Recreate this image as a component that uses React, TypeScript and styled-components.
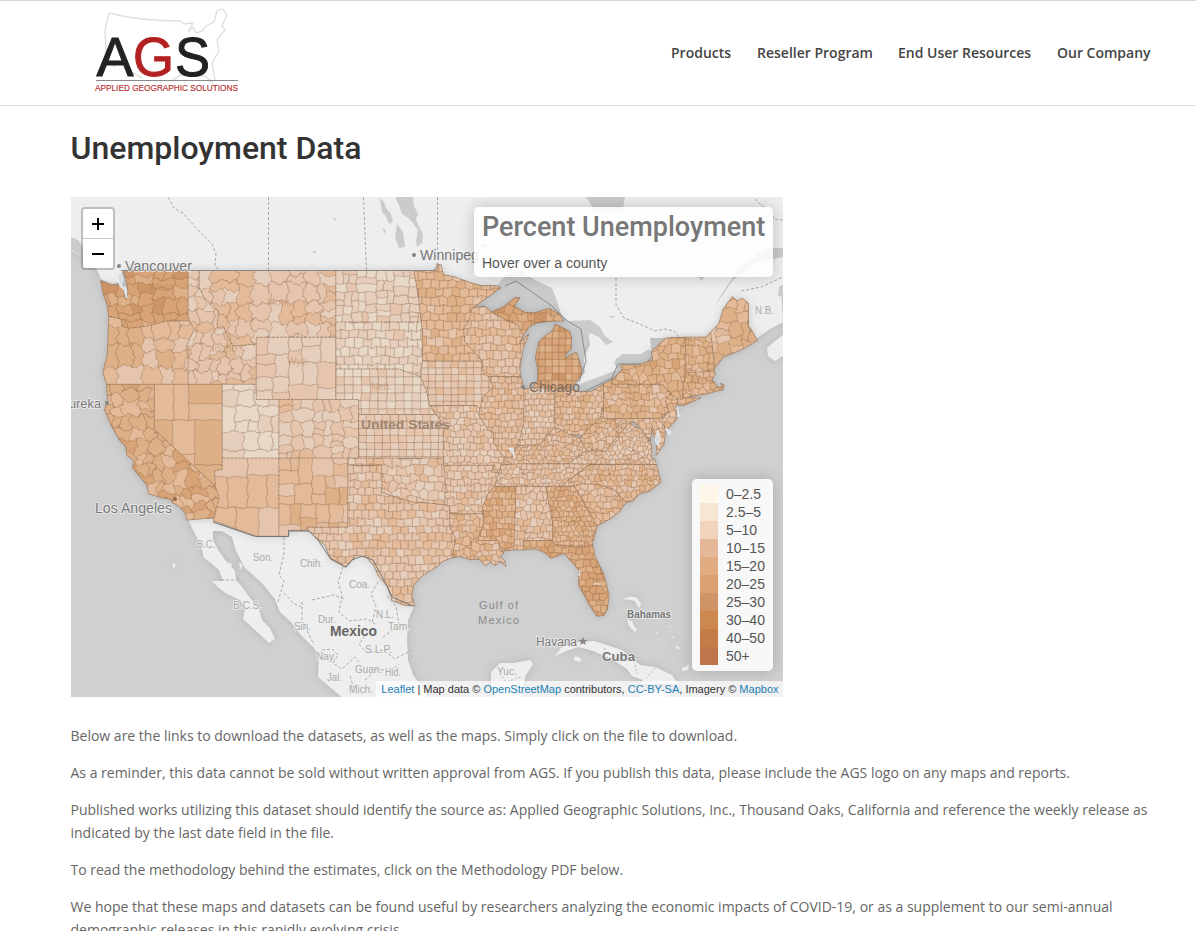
import React from 'react';
import styled, { createGlobalStyle } from 'styled-components';

const Global = createGlobalStyle`
  *, *::before, *::after { box-sizing: border-box; }
  html, body { margin: 0; padding: 0; background: #fff; overflow: hidden; }
  body { height: 931px; font-family: "Open Sans", Arial, sans-serif; color: #666; }
`;

const Page = styled.div`
  height: 931px;
  overflow: hidden;
`;
const Header = styled.header`
  display: flex;
  justify-content: space-between;
  height: 106px;
  border-top: 1px solid #d9d9d9;
  border-bottom: 1px solid #dcdcdc;
  padding: 0 46px 0 89px;
`;
const Logo = styled.svg`
  display: block;
  width: 160px;
  height: 104px;
  overflow: visible;
`;
const Nav = styled.nav`
  display: flex;
  gap: 26px;
  padding-top: 42px;
`;
const NavLink = styled.a<{ $w: number }>`
  width: ${p => p.$w}px;
  font: 600 14px/20px "Open Sans", sans-serif;
  color: #444;
  white-space: nowrap;
`;
const Main = styled.main`
  padding: 22px 45px 0 70.5px;
`;
const Title = styled.h1`
  margin: 0 0 28px;
  font: 500 32px/41px Roboto, sans-serif;
  color: #333;
`;
const MapFrame = styled.section`
  position: relative;
  width: 712px;
  height: 500px;
  overflow: hidden;
  background: #d0d0d0;
`;
const MapSvg = styled.svg`
  display: block;
  width: 712px;
  height: 500px;
`;
const ZoomControl = styled.div`
  position: absolute;
  left: 10px;
  top: 10px;
  width: 34px;
  border: 2px solid rgba(0, 0, 0, 0.2);
  border-radius: 4px;
  background-clip: padding-box;
`;
const ZoomButton = styled.button<{ $first?: boolean }>`
  display: flex;
  align-items: center;
  justify-content: center;
  width: 30px;
  height: ${p => (p.$first ? 30 : 29)}px;
  padding: 0;
  border: 0;
  border-bottom: ${p => (p.$first ? '1px solid #ccc' : '0')};
  border-radius: ${p => (p.$first ? '2px 2px 0 0' : '0 0 2px 2px')};
  background: #fff;
  color: #000;
`;
const Panel = styled.div`
  position: absolute;
  border-radius: 5px;
  background: rgba(255, 255, 255, 0.85);
  box-shadow: 0 0 15px rgba(0, 0, 0, 0.2);
`;
const Info = styled(Panel)`
  right: 10px;
  top: 10px;
  width: 299px;
  height: 70px;
  padding: 6px 8px 6px 8.500px;
  color: #555;
  font: 14px/16px "Liberation Sans", Arial, sans-serif;
  white-space: nowrap;
`;
const InfoTitle = styled.h4`
  margin: 0 0 15px;
  font: 500 27px/28px Roboto, sans-serif;
  height: 27px;
  color: #777;
`;
const Legend = styled(Panel)`
  right: 10px;
  bottom: 26px;
  width: 81px;
  height: 192px;
  padding: 6px 0 6px 8px;
  color: #555;
  font: 14px/18px "Liberation Sans", Arial, sans-serif;
  white-space: nowrap;
`;
const LegendRow = styled.div`
  display: flex;
  gap: 8.500px;
  height: 18px;
`;
const Swatch = styled.i<{ $c: string }>`
  flex: none;
  width: 18px;
  height: 18px;
  background: ${p => p.$c};
`;
const Attribution = styled.div`
  position: absolute;
  right: 0;
  bottom: 0;
  height: 16px;
  padding: 0 4px 0 5px;
  background: rgba(255, 255, 255, 0.7);
  color: #333;
  font: 11px/16px "Liberation Sans", Arial, sans-serif;
  white-space: nowrap;
`;
const Link = styled.a`
  color: #1b80b4;
`;
const Copy = styled.div`
  padding-top: 27px;
`;
const Para = styled.p`
  margin: 0 0 14px;
  font-size: 14px;
  line-height: 23px;
  white-space: nowrap;
`;

/* ---- projection (Web Mercator) ---- */
type Pt = [number, number];
const px = (lon: number) => lon * 11.378 + 1519.7;
const py = (lat: number) => 911.8 - 651.9 * Math.log(Math.tan(Math.PI / 4 + (lat * Math.PI) / 360));
const parse = (s: string): Pt[] =>
  s.trim().split(/\s+/).map(q => {
    const [a, b] = q.split(',').map(Number);
    return [px(-a), py(b)] as Pt;
  });
const noise = (a: number, b: number, c: number) => {
  const v = Math.sin(a * 127.1 + b * 311.7 + c * 74.7) * 43758.5453;
  return v - Math.floor(v);
};
const toPath = (pts: Pt[]) => 'M' + pts.map(p => p[0].toFixed(1) + ' ' + p[1].toFixed(1)).join('L') + 'Z';

/* [id, shade, county width, county height, irregularity, outline as west-longitude,latitude] */
type State = [string, number, number, number, number, string];
const STATES: State[] = [
  ['WA', 4.9, 15, 12, 0.7, '124.7,48.4 123.9,48.17 123.1,48.15 122.75,48.1 122.65,47.4 122.4,47.3 122.3,47.8 122.5,48.5 122.75,49 117.03,49 117.03,46.4 116.92,46 118.98,46 119.3,45.93 120.5,45.7 121.2,45.65 122.2,45.55 122.8,45.65 122.9,46.1 123.4,46.2 124,46.3 124.1,46.9 124.5,47.7'],
  ['OR', 3, 18, 17, 0.8, '124,46.25 123.4,46.2 122.9,46.1 122.8,45.65 122.2,45.55 121.2,45.65 120.5,45.7 119.3,45.93 118.98,46 116.92,46 116.5,45.5 117.2,44.4 117.03,44.2 117.03,42 124.2,42 124.5,42.8 124.1,44'],
  ['ID', 1.8, 14, 12, 0.9, '117.03,49 116.05,49 116.05,48 115.7,47.5 114.7,46.7 114.35,46.65 114.5,45.6 113.9,45.65 113.5,44.9 113,44.45 111.5,44.55 111.05,44.5 111.05,42 117.03,42 117.03,44.2 117.2,44.4 116.5,45.5 116.92,46 117.03,46.4'],
  ['MT', 2.1, 16, 14, 0.95, '116.05,49 104.05,49 104.05,45 111.05,45 111.05,44.5 111.5,44.55 113,44.45 113.5,44.9 113.9,45.65 114.5,45.6 114.35,46.65 114.7,46.7 115.7,47.5 116.05,48'],
  ['WY', 1.5, 20, 17, 0.35, '111.05,45 104.05,45 104.05,41 111.05,41'],
  ['CA', 4, 14, 11, 0.95, '124.2,42 120,42 120,39 114.63,35 114.3,34.2 114.72,32.72 117.12,32.53 117.3,33.1 118,33.65 118.4,33.8 118.5,34.05 119.2,34.15 120.5,34.45 120.65,35.1 121.9,36.3 121.8,36.85 122.4,37.2 122.5,37.8 123,38.2 123.8,39.3 124.35,40.3 124.1,41'],
  ['NV', 3.5, 28, 31, 0.2, '120,42 114.04,42 114.04,36.2 114.7,36.1 114.63,35 120,39'],
  ['UT', 0.7, 19, 14, 0.5, '114.04,42 111.05,42 111.05,41 109.05,41 109.05,37 114.04,37'],
  ['AZ', 2.5, 25, 26, 0.35, '114.04,37 109.05,37 109.05,31.33 111.07,31.33 114.81,32.5 114.3,34.2 114.63,35 114.7,36.1 114.04,36.2'],
  ['NM', 3.2, 16, 16, 0.3, '109.05,37 103,37 103,32 106.6,32 106.5,31.78 108.2,31.78 108.2,31.33 109.05,31.33'],
  ['CO', 1.6, 13, 11, 0.6, '109.05,41 102.05,41 102.05,37 109.05,37'],
  ['ND', 0.9, 11, 10, 0.3, '104.05,49 97.2,49 96.8,47.5 96.55,45.94 104.05,45.94'],
  ['SD', 0.6, 9, 8.5, 0.4, '104.05,45.94 96.55,45.94 96.45,45.3 96.45,43.5 96.6,42.5 97.8,42.8 98.5,43 104.05,43'],
  ['NE', 0.9, 8.5, 8, 0.25, '104.05,43 98.5,43 97.8,42.8 96.6,42.5 96.1,41.6 95.8,40.6 95.3,40 102.05,40 102.05,41 104.05,41'],
  ['KS', 1.4, 8, 7, 0.25, '102.05,40 95.3,40 94.9,39.7 94.6,39.1 94.6,37 102.05,37'],
  ['OK', 1.8, 9, 8, 0.65, '103,37 94.6,37 94.43,35.4 94.48,33.65 96,33.8 97.2,33.85 98.5,34.1 100,34.55 100,36.5 103,36.5'],
  ['TX', 2.1, 7.8, 7.6, 0.34, '103,36.5 100,36.5 100,34.55 98.5,34.1 97.2,33.85 96,33.8 94.48,33.65 94.04,33.5 94.04,32 93.55,31.2 93.7,30.3 93.85,29.7 94.7,29.4 95.2,29 96.5,28.3 97.2,27.6 97.4,26.8 97.15,25.95 98.2,26.05 99.1,26.4 99.5,27.5 100.3,28.3 100.7,29.1 101.4,29.77 102.3,29.88 102.8,29.35 103.2,28.98 104.5,29.6 105,30.65 106.5,31.78 106.6,32 103,32'],
  ['MN', 3.1, 8.5, 8.2, 0.35, '97.2,49 95.15,49 95.15,49.38 94.8,49.3 94.6,48.75 93.5,48.6 92.3,48.3 91.3,48.1 90,48.1 89.55,48 92.1,46.75 92.3,46.1 92.8,45.6 92.75,44.75 91.2,43.5 96.45,43.5 96.45,45.3 96.55,45.94 96.8,47.5'],
  ['IA', 1.8, 7.6, 6.7, 0.18, '96.45,43.5 91.2,43.5 91.1,42.7 90.65,42.5 90.2,41.8 91.1,41.2 91.4,40.4 91.7,40.6 95.8,40.6 96.1,41.6 96.6,42.5'],
  ['MO', 1.9, 6.8, 6.3, 0.5, '95.8,40.6 91.7,40.6 91.4,40.4 91.5,40 90.7,39 90.2,38.7 90.2,38.1 89.5,37.3 89.15,37 89.5,36.5 89.7,36 90.4,36 90.1,36.5 94.6,36.5 94.6,39.1 94.9,39.7'],
  ['AR', 2.1, 7, 6.6, 0.5, '94.6,36.5 90.1,36.5 90.4,36 89.7,36 90.1,35 90.6,34.6 91.15,33.5 91.15,33 94.04,33 94.04,33.5 94.48,33.65 94.43,35.4'],
  ['LA', 2.9, 6.6, 6, 0.75, '94.04,33 91.15,33 91,32.4 91.6,31 89.75,31 89.6,30.2 89.3,30.1 89.6,29.8 89.2,29.4 89.1,29.05 89.6,29.4 90.1,29.1 90.4,29.4 90.9,29.1 91.4,29.6 92.2,29.55 93.2,29.8 93.85,29.7 93.7,30.3 93.55,31.2 94.04,32'],
  ['WI', 2.5, 7.5, 7.5, 0.4, '92.1,46.75 91,46.9 90.4,46.55 89,46 88.1,45.8 87.6,45.1 88,44.55 87.1,45.2 87.6,44.3 87.9,43 87.8,42.5 90.65,42.5 91.1,42.7 91.2,43.5 92.75,44.75 92.8,45.6 92.3,46.1'],
  ['UP', 4.7, 9, 8, 0.6, '90.4,46.55 89.3,46.85 88.3,47.4 87.9,47.4 88.4,46.9 87.4,46.5 86.5,46.5 85.3,46.75 84.5,46.45 84,46 85,46 86.3,45.9 87,45.7 87.6,45.1 88.1,45.8 89,46'],
  ['MI', 4.8, 6.7, 7, 0.22, '84.75,45.8 83.5,45.35 83.35,45 83.35,44.3 83.9,43.9 83.9,43.65 83.4,43.9 82.9,44.05 82.45,43 82.5,42.6 83.2,41.95 83.45,41.73 86.8,41.76 86.3,42.3 86.3,43 86.5,43.7 86.2,44.7 85.6,45.1 85,45.4'],
  ['IL', 2.6, 6.6, 6.2, 0.45, '90.65,42.5 87.8,42.5 87.52,41.7 87.53,39.35 87.9,38.3 88.1,37.9 88.5,37.1 89.15,37 89.5,37.3 90.2,38.1 90.2,38.7 90.7,39 91.5,40 91.4,40.4 91.1,41.2 90.2,41.8'],
  ['IN', 2, 5.6, 5.7, 0.35, '87.52,41.7 86.8,41.76 84.8,41.76 84.8,39.1 85.4,38.7 86,38 87.2,37.85 88.1,37.9 87.9,38.3 87.53,39.35'],
  ['OH', 2.8, 5.8, 5.8, 0.4, '84.8,41.73 83.45,41.73 82.7,41.5 81.7,41.5 80.52,42 80.52,40.6 80.85,39.7 81.8,39.1 82.3,38.6 83.6,38.65 84.3,39 84.8,39.1'],
  ['KY', 2.6, 5, 4.6, 0.85, '84.8,39.1 84.3,39 83.6,38.65 82.6,38.4 82,37.5 83.7,36.6 88,36.6 89.5,36.5 89.15,37 88.5,37.1 88.1,37.9 87.2,37.85 86,38 85.4,38.7'],
  ['TN', 2.2, 5.4, 5, 0.75, '89.5,36.5 88,36.6 83.7,36.6 81.7,36.6 84.3,35 90.1,35 89.7,36'],
  ['MS', 3.9, 6.2, 6.2, 0.4, '90.1,35 88.2,35 88.4,30.3 89.6,30.2 89.75,31 91.6,31 91,32.4 91.15,33.5 90.6,34.6'],
  ['AL', 2.1, 6.5, 6.5, 0.6, '88.2,35 85.6,35 85,32.3 85,31 87.6,31 87.5,30.3 88.4,30.3'],
  ['GA', 3.7, 5.1, 5, 0.65, '85.6,35 83.1,35 82.2,33.8 81.1,32.1 81.5,30.75 82.1,30.5 84.9,30.7 85,31 85,32.3'],
  ['FL', 4.5, 7, 6.5, 0.45, '87.6,31 85,31 84.9,30.7 82.1,30.5 81.5,30.75 81.3,29.8 80.5,28.4 80.05,26.8 80.2,25.7 80.5,25.2 81.1,25.15 81.8,26.1 82.2,26.8 82.7,27.6 82.65,28.7 83.1,29.2 84,30.05 85.1,29.65 85.7,30.1 86.5,30.4 87.5,30.3'],
  ['SC', 2.7, 6.6, 6, 0.7, '83.1,35 82.3,35.2 81,35.1 79.7,34.8 78.55,33.85 79.2,33.1 80,32.6 81.1,32.1 82.2,33.8'],
  ['NC', 2.9, 5.6, 5.4, 0.75, '84.3,35 81.7,36.55 75.9,36.55 75.5,35.3 76.5,34.65 77.4,34.45 78,33.9 78.55,33.85 79.7,34.8 81,35.1 82.3,35.2 83.1,35'],
  ['VA', 2, 4.8, 4.5, 0.9, '83.7,36.6 82,37.5 80.3,37.5 79,38.8 78.3,39.4 77.1,38.9 76.3,37.9 76.3,37 76,36.9 75.9,36.55'],
  ['WV', 2.7, 5.5, 5.3, 0.85, '82.6,38.4 82.3,38.6 81.8,39.1 80.85,39.7 80.52,40.6 80.52,39.72 77.8,39.5 78.3,39.4 79,38.8 80.3,37.5 82,37.5'],
  ['MD', 2.4, 5.6, 5.4, 0.8, '79.5,39.72 75.8,39.72 75.4,39.8 75.1,38.8 75.2,38 75.9,37.2 75.8,38 76.3,39.1 76.4,38.2 77.1,38.9 77.8,39.5 79.5,39.3'],
  ['PA', 3.2, 7.6, 6.6, 0.7, '80.52,42 79.76,42.3 79.76,42 75.3,42 74.7,41.4 75.1,40.9 74.8,40.2 75.4,39.8 75.8,39.72 80.52,39.72'],
  ['NJ', 3.2, 6.5, 6, 0.7, '74.7,41.4 74,41 74.2,40.5 74.1,39.7 74.9,39 75.5,39.5 74.8,40.2 75.1,40.9'],
  ['NY', 3.6, 8, 7.5, 0.75, '79.76,42.3 78.9,42.9 79,43.25 77.5,43.25 76.2,43.55 76.3,44.1 75,44.95 73.35,45 73.25,42.75 73.5,42.05 73.6,41.1 72,41.1 73.5,40.6 74,40.65 74,41 74.7,41.4 75.3,42 79.76,42'],
  ['NE2', 3.6, 6.8, 6.2, 0.75, '73.5,42.05 73.25,42.75 71.1,42.9 70.7,42.7 71,42.3 70.5,41.8 70.1,41.8 70.2,42.05 69.95,41.95 70,41.65 70.7,41.55 71.3,41.4 73.6,41.1'],
  ['VTNH', 3.2, 7, 7.6, 0.75, '73.35,45 71.5,45 71.1,45.3 70.75,43.1 70.8,42.85 73.25,42.75'],
  ['ME', 3, 12, 13, 0.6, '71.1,45.3 70.4,45.8 70,46.7 69.2,47.45 68.8,47.2 68.3,47.35 67.8,47.07 67.8,45.7 67.4,45.3 67,44.8 68.2,44.3 69,44.05 70,43.75 70.75,43.1'],
];

const SHADES = ['#e7d8c8', '#e6cebc', '#e5c5ae', '#e3bb9a', '#deb087', '#d7a377', '#cd9567'];

const shadeIndex = (v: number) => Math.max(0, Math.min(SHADES.length - 1, Math.round(v)));

/* Dense, fairly even counties: a jittered brick pattern. */
function brickMesh(pts: Pt[], seed: number, w: number, h: number, j: number, level: number) {
  const xs = pts.map(p => p[0]);
  const ys = pts.map(p => p[1]);
  const x0 = Math.min(...xs) - w;
  const y0 = Math.min(...ys);
  const cols = Math.ceil((Math.max(...xs) - x0) / w) + 1;
  const rows = Math.ceil((Math.max(...ys) - y0) / h) + 1;
  const vert = (k: number, r: number): Pt => {
    const flat = j < 0.3 ? 0.25 : 1;
    return [
      x0 + k * w * 0.5 + (noise(k, r, seed) - 0.5) * w * j * 0.6,
      y0 + r * h + (noise(k, r, seed + 9) - 0.5) * h * j * 1.05 * flat,
    ];
  };
  const out: string[] = SHADES.map(() => '');
  for (let r = 0; r < rows; r++) {
    const off = j < 0.3 ? 0 : r % 2;
    for (let c = 0; c < cols; c++) {
      const k = c * 2 + off;
      const poly: Pt[] = [vert(k, r), vert(k + 1, r), vert(k + 2, r), vert(k + 2, r + 1), vert(k + 1, r + 1), vert(k, r + 1)];
      out[shadeIndex(level + (noise(c, r, seed + 3) - 0.5) * 1.9)] += toPath(poly);
    }
  }
  return out;
}

/* Large, uneven western counties: recursive splits whose edges follow a warp field. */
function splitMesh(pts: Pt[], seed: number, w: number, h: number, j: number, level: number) {
  const out: string[] = SHADES.map(() => '');
  const amp = j * 2;
  const warp = (x: number, y: number): Pt => [
    x + amp * (Math.sin(y * 0.41 + x * 0.13 + seed) + 0.55 * Math.sin(y * 1.3 - x * 0.5)),
    y + amp * (Math.sin(x * 0.37 - y * 0.17 + seed) + 0.55 * Math.sin(x * 1.2 + y * 0.6)),
  ];
  const edge = (a: Pt, b: Pt): Pt[] => {
    const n = Math.max(1, Math.round(Math.hypot(b[0] - a[0], b[1] - a[1]) / 2.5));
    return Array.from({ length: n }, (_, i) => warp(a[0] + ((b[0] - a[0]) * i) / n, a[1] + ((b[1] - a[1]) * i) / n));
  };
  let count = 0;
  const split = (x1: number, y1: number, x2: number, y2: number) => {
    count += 1;
    const n = count;
    const bw = x2 - x1;
    const bh = y2 - y1;
    const limit = w * h * (0.85 + noise(n, seed, 2) * 1.1);
    if (bw * bh > limit) {
      const t = 0.34 + noise(n, seed, 4) * 0.32;
      if (bw / w > (bh / h) * (0.8 + noise(n, seed, 6) * 0.4)) {
        split(x1, y1, x1 + bw * t, y2);
        split(x1 + bw * t, y1, x2, y2);
      } else {
        split(x1, y1, x2, y1 + bh * t);
        split(x1, y1 + bh * t, x2, y2);
      }
      return;
    }
    const a: Pt = [x1, y1], b: Pt = [x2, y1], c: Pt = [x2, y2], d: Pt = [x1, y2];
    out[shadeIndex(level + (noise(n, seed, 8) - 0.5) * 2)] += toPath([...edge(a, b), ...edge(b, c), ...edge(c, d), ...edge(d, a)]);
  };
  const xs = pts.map(p => p[0]);
  const ys = pts.map(p => p[1]);
  split(Math.min(...xs) - 3, Math.min(...ys) - 3, Math.max(...xs) + 3, Math.max(...ys) + 3);
  return out;
}

const DRAWN = STATES.map(([id, level, w, h, j, s], i) => {
  const pts = parse(s);
  const build = w > 10 ? splitMesh : brickMesh;
  return { id, outline: toPath(pts), cells: build(pts, i * 13 + 1, w, h, j, level), base: SHADES[Math.round(level)] };
});

function Choropleth() {
  return (
    <g>
      <defs>
        {DRAWN.map(s => (
          <clipPath id={'clip' + s.id} key={s.id}><path d={s.outline} /></clipPath>
        ))}
      </defs>
      <g filter="url(#coast)">
        {DRAWN.map(s => <path key={s.id} d={s.outline} fill={s.base} stroke="#a58a73" strokeWidth="1.1" strokeLinejoin="round" />)}
      </g>
      {DRAWN.map(s => (
        <g key={s.id} clipPath={`url(#clip${s.id})`}>
          {s.cells.map((d, k) => d && <path key={k} d={d} fill={SHADES[k]} stroke="#8c6547" strokeOpacity=".4" strokeWidth=".6" />)}
        </g>
      ))}
      {DRAWN.map(s => <path key={s.id} d={s.outline} fill="none" stroke="#7d5f48" strokeOpacity=".45" strokeWidth=".65" strokeDasharray="3 1" />)}
    </g>
  );
}

type LabelSpec = { t: string; x: number; y: number; w: number; s?: number; c?: string; b?: boolean };
const LABELS: LabelSpec[] = [
  { t: 'Vancouver', x: 125, y: 271, w: 67, s: 14 },
  { t: 'Winnipeg', x: 420, y: 260, w: 59, s: 14 },
  { t: 'ureka', x: 69, y: 408, w: 32, s: 13.5 },
  { t: 'Los Angeles', x: 95, y: 513, w: 77, s: 14 },
  { t: 'N.B.', x: 755, y: 314, w: 19, s: 10, c: '#aaa' },
  { t: 'B.C.', x: 197, y: 548, w: 18, s: 10, c: '#aaa' },
  { t: 'Son.', x: 253, y: 561, w: 20, s: 10, c: '#aaa' },
  { t: 'B.C.S.', x: 233, y: 609, w: 29, s: 10.5, c: '#aaa' },
  { t: 'Chih.', x: 300, y: 567, w: 23, s: 10.5, c: '#aaa' },
  { t: 'Coa.', x: 349, y: 588, w: 21, s: 10, c: '#aaa' },
  { t: 'Dur.', x: 318, y: 623, w: 18, s: 10, c: '#aaa' },
  { t: 'N.L.', x: 376, y: 618, w: 18, s: 10, c: '#aaa' },
  { t: 'Sin.', x: 294, y: 630, w: 17, s: 10, c: '#aaa' },
  { t: 'Tam.', x: 388, y: 630, w: 22, s: 10, c: '#aaa' },
  { t: 'S.L.P.', x: 365, y: 653, w: 27, s: 10, c: '#aaa' },
  { t: 'Nay.', x: 316, y: 660, w: 20, s: 10, c: '#aaa' },
  { t: 'Guan.', x: 355, y: 673, w: 27, s: 10, c: '#aaa' },
  { t: 'Hid.', x: 385, y: 676, w: 16, s: 10, c: '#aaa' },
  { t: 'Jal.', x: 327, y: 681, w: 15, s: 10, c: '#aaa' },
  { t: 'Mich.', x: 349, y: 693, w: 24, s: 10, c: '#aaa' },
  { t: 'Yuc.', x: 497, y: 675, w: 20, s: 10, c: '#aaa' },
  { t: 'Mexico', x: 330, y: 636, w: 47, s: 14, c: '#666', b: true },
  { t: 'Cuba', x: 602, y: 661, w: 33, s: 13.5, c: '#777', b: true },
  { t: 'Bahamas', x: 627, y: 618, w: 44, s: 10, c: '#777', b: true },
  { t: 'Havana', x: 536, y: 646, w: 41, s: 12 },
  { t: 'Gulf of', x: 479, y: 609, w: 39, s: 11, c: '#8a8a8a' },
  { t: 'Mexico', x: 478, y: 624, w: 41, s: 11, c: '#8a8a8a' },
];

function BaseMap() {
  return (
    <g>
      <g fill="#eee" filter="url(#coast)">
        <path d="M60 180H800V287L781 286 783 322 770 329 757 338H650L651 350 646 354H625L616 359 617 370 603 376 588 384 578 389 578 381 585 372 583 360 590 345 588 330 570 324 540 322 480 322 433 272H122L119 282 112 284 101 279 97 270 87 262 71 250Z" />
        <path d="M800 331L783 335 775 341 767 348 768 356 775 361 800 345Z" />
        <path d="M188 519L193 530 201 545 204 558 211 563 219 570 223 581 212 581 219 588 227 594 240 600 245 609 243 619 255 630 269 643 275 639 270 628 262 620 258 606 250 598 243 588 236 580 235 571 226 561 218 550 213 540 213 531 222 531 232 537 236 551 245 568 262 583 275 599 280 612 292 623 300 634 313 647 319 655 318 677 330 687 345 700H432L413 675 408 660 407 640 408 620 414 606 400 590 373 550 350 553 308 525 288 525 255 530 213 519Z" />
        <path d="M491 672L500 663 514 663 530 660 533 664 526 675 522 690 522 700H491Z" />
        <path d="M555 656L561 648 572 643 583 642 594 641 607 645 622 650 640 665 655 667 672 675 678 684H640L643 680 632 676 627 669 610 658 590 650 578 647 566 651ZM575 656L582 659 579 662 574 660Z" />
        <path d="M623 599Q632 595 637 598L641 604 639 608 635 601 630 600ZM627 620L632 621 634 626 637 630 635 632 629 626ZM675 645L680 648 678 650ZM682 668L689 665 688 670 682 671Z" />
        <path d="M173 562L176 565 173 569ZM228 562L232 564 231 568ZM239 562L243 565 241 570Z" />
        <path d="M655 632h2l1 2zM668 626h2l2 2zM672 636l2 1-1 2zM640 690h30v10h-30z" />
      </g>
      <g fill="#c9cbcc">
        <path d="M71 237L78 240 85 250 98 263 96 267 85 261 71 249Z" />
        <path d="M395 197H413L414 206 418 214 416 219 418 225 423 234 422 243 417 247 416 241 418 230 412 222 407 217 402 214 399 205ZM380 198L384 202 386 208 391 214 393 222 389 224 386 216 382 212ZM397 224L403 232 405 247 399 248 395 238ZM382 227l4 4-1 3z" />
        <path d="M586 197H625L623 208 610 212 594 209Z" />
        <path d="M472 309L483 294 497 285 506 275 520 270 535 280 552 288 557 301 561 314 568 321 590 320 600 327 605 336 613 342 606 345 599 337 590 333 585 345 584 362 583 372 576 378 560 385 538 390 523 394 517 370 510 325Z" />
        <path d="M614 362L622 354 641 354 649 349 652 357 642 366 616 367ZM566 393L578 385 590 380 615 371 620 374 602 390 585 397Z" />
        <path d="M714 306L722 296 733 280 757 262 783 257V248H768L753 257 738 270 727 286ZM779 286L800 280V300L778 296Z" />
        <path d="M478 244l9 0-1 4zM640 233l9-2-2 5zM698 277l6 0-2 4zM608 316h8l-3 2zM500 257l7 1-3 3zM333 218l4 1-3 2zM313 251h3v2h-3z" />
      </g>
      <path d="M168 197l6 11 9 5 14 16 15 15 4 10-1 12 5 5M268.500 197v74M363.500 197l3 73M437.500 197v65M616 278V305L624 318 635 322 655 331 665 329 674 331 680 338M741 291l20-4 22-10M755 199l7 7 8 4 4 9 9 1" fill="none" stroke="#a8a8a8" strokeWidth="1" strokeDasharray="3 2" />
      <path d="M284 537v17l-5 21 5 6-6 21M284 593l9 10 10 5M343 567l-5 15 4 13-3 17 10 9 18-2 8 5M378 582l-7 12 5 12-4 17M312 600l22-5 10 4M302 602v18l12 25M322 650l10-1 6 6-5 8 9 6 13-12 5 6M368 632l-9 12 8 9 16-3 12 9 17-9M365 680l12-11 14 2 8-7M350 676l5 17M387 596l9 10 3 19-17 13M221 580h18" fill="none" stroke="#aaa" strokeWidth="1" strokeDasharray="3 2" />
      <path d="M500 673l6 9 15-5M595 651l-6 4M605 648l-3 9M635 665l2 9M655 668l-8 10" fill="none" stroke="#b5b5b5" strokeDasharray="2 2" />
      <path d="M505 286L516 281 552 306 566 320 581 329 586 361 579 382M579 394L592 388 612 378 618 364H645L654 355" fill="none" stroke="#858585" strokeWidth=".9" />
    </g>
  );
}

function MapDrawing() {
  return (
    <MapSvg viewBox="71 197 712 500">
      <defs>
        <filter id="coast" x="-10%" y="-10%" width="120%" height="120%">
          <feDropShadow dx="0" dy="0" stdDeviation="4" floodColor="#777" floodOpacity=".32" />
        </filter>
      </defs>
      <BaseMap />
      <Choropleth />
      <path d="M121 270.500H433L439 265" fill="none" stroke="#888" strokeWidth="1" />
      <path d="M213 522L255.500 536.500H288.500V531H309L318 540 330 558 346 567 352 560 362 556 373 560 385 582 392 597 413 606" fill="none" stroke="#777" strokeWidth="1" />
      <path d="M120 272l3 7-2 6 5 3 1 10-3-8-4-4-2-9ZM676 408l2 0v8h3M658 430l2 9-2 7-3-6ZM666 428l5 4-2 3ZM508 448l5 1 2 9M593 584h8M580 570l-1 6" fill="#d5dade" stroke="#eee" strokeWidth="1" />
      <g fill="#858585">
        <circle cx="119" cy="266" r="2" /><circle cx="414" cy="255" r="2" />
        <circle cx="107" cy="403" r="2" /><circle cx="523" cy="387" r="2" />
        <circle cx="175" cy="499" r="2" fill="#946a4a" />
        <path d="M583 637l1.200 3h3.300l-2.600 2 1 3.100-2.900-1.800-2.900 1.800 1-3.100-2.600-2h3.300z" />
      </g>
      <g fontFamily="Liberation Sans, Arial, sans-serif">
        {LABELS.map((l, i) => (
          <text key={i} x={l.x} y={l.y} textLength={l.w} lengthAdjust={l.c === '#8a8a8a' ? 'spacing' : 'spacingAndGlyphs'} fontSize={l.s} fontWeight={l.b ? 700 : 400} fill={l.c || '#777'} stroke="#eee" strokeWidth={l.c === '#8a8a8a' ? 0 : 1.5} paintOrder="stroke">{l.t}</text>
        ))}
        <text x="529" y="392" textLength="51" lengthAdjust="spacingAndGlyphs" fontSize="14" fill="#7d6c5e">Chicago</text>
        <text x="361" y="429" textLength="89" lengthAdjust="spacingAndGlyphs" fontSize="13.500" fontWeight="700" fill="#a08573">United States</text>
        <g fontSize="10" fill="#a9784c" fillOpacity=".4">
          <text x="149" y="291">Wash.</text><text x="267" y="306">Mont.</text>
          <text x="212" y="352">Idaho</text><text x="287" y="365">Wyo.</text>
          <text x="371" y="390">Neb.</text><text x="690" y="384">Mass.</text>
        </g>
      </g>
    </MapSvg>
  );
}

const GRADES: [string, string][] = [
  ['#fff6ea', '0–2.5'], ['#f8e6d5', '2.5–5'], ['#f2d4bd', '5–10'], ['#e4b899', '10–15'], ['#e1ac82', '15–20'],
  ['#dc9f6f', '20–25'], ['#d09366', '25–30'], ['#cd8850', '30–40'], ['#c57c46', '40–50'], ['#c0744a', '50+'],
];

const NAV: [string, number][] = [['Products', 60], ['Reseller Program', 115], ['End User Resources', 133], ['Our Company', 93]];

export default function App() {
  return (
    <Page>
      <Global />
      <Header>
        <Logo viewBox="89 1 160 104">
          <path d="M109 13Q140 21 180 21L184 24 193 23 188 32 193 27 196 33 202 31 206 26 214 22 217 11 223 9 227 15 222 26 225 30 217 40 219 51 212 63 215 80M109 13L105 30 106 53 115 68M132 72L142 78M172 81L180 75 205 76 212 82 215 88" fill="none" stroke="#dedede" strokeWidth="1.3" />
          <g fontFamily="Liberation Sans, Arial, sans-serif">
            <g fontSize="55" strokeWidth="1">
              <text x="96.500" y="75.500" fill="#222" stroke="#222" textLength="37" lengthAdjust="spacingAndGlyphs">A</text>
              <text x="133" y="75.500" fill="#b22222" stroke="#b22222" textLength="41" lengthAdjust="spacingAndGlyphs">G</text>
              <text x="175" y="75.500" fill="#222" stroke="#222" textLength="35" lengthAdjust="spacingAndGlyphs">S</text>
            </g>
            <path d="M96 80.500H238" stroke="#8a8a8a" />
            <text x="95" y="91" fontSize="9.500" fill="#b5302f" stroke="#b5302f" strokeWidth=".15" textLength="143" lengthAdjust="spacingAndGlyphs">APPLIED GEOGRAPHIC SOLUTIONS</text>
          </g>
        </Logo>
        <Nav>
          {NAV.map(([t, w]) => <NavLink key={t} $w={w}>{t}</NavLink>)}
        </Nav>
      </Header>
      <Main>
        <Title>Unemployment Data</Title>
        <MapFrame>
          <MapDrawing />
          <ZoomControl>
            <ZoomButton $first aria-label="Zoom in">
              <svg width="14" height="14"><path d="M1 7H13M7 1V13" stroke="#000" strokeWidth="2" /></svg>
            </ZoomButton>
            <ZoomButton aria-label="Zoom out">
              <svg width="14" height="14"><path d="M1 7H13" stroke="#000" strokeWidth="2" /></svg>
            </ZoomButton>
          </ZoomControl>
          <Info>
            <InfoTitle>Percent Unemployment</InfoTitle>
            Hover over a county
          </Info>
          <Legend>
            {GRADES.map(([c, t]) => (
              <LegendRow key={t}><Swatch $c={c} />{t}</LegendRow>
            ))}
          </Legend>
          <Attribution>
            <Link>Leaflet</Link> | Map data © <Link>OpenStreetMap</Link> contributors, <Link>CC-BY-SA</Link>, Imagery © <Link>Mapbox</Link>
          </Attribution>
        </MapFrame>
        <Copy>
          <Para>Below are the links to download the datasets, as well as the maps. Simply click on the file to download.</Para>
          <Para>As a reminder, this data cannot be sold without written approval from AGS. If you publish this data, please include the AGS logo on any maps and reports.</Para>
          <Para>Published works utilizing this dataset should identify the source as: Applied Geographic Solutions, Inc., Thousand Oaks, California and reference the weekly release as<br />indicated by the last date field in the file.</Para>
          <Para>To read the methodology behind the estimates, click on the Methodology PDF below.</Para>
          <Para>We hope that these maps and datasets can be found useful by researchers analyzing the economic impacts of COVID-19, or as a supplement to our semi-annual<br />demographic releases in this rapidly evolving crisis.</Para>
        </Copy>
      </Main>
    </Page>
  );
}
